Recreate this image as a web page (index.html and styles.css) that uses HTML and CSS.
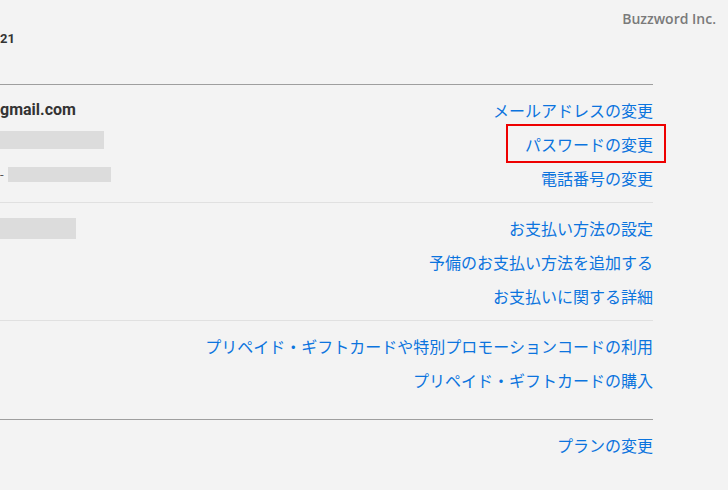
FILE: index.html
```html
<!DOCTYPE html>
<html lang="ja">
<head>
  <meta charset="UTF-8">
  <title>アカウント</title>
  <link rel="stylesheet" href="styles.css">
</head>
<body>
  <div class="brand">Buzzword Inc.</div>

  <header class="member">
    <span class="member-since">21</span>
  </header>

  <main class="account">
    <section class="block">
      <div class="row">
        <span class="email">gmail.com</span>
        <a href="#" class="link">メールアドレスの変更</a>
      </div>
      <div class="row">
        <span class="mask mask-pass"></span>
        <a href="#" class="link marked">パスワードの変更</a>
      </div>
      <div class="row">
        <span class="phone"><span class="dash">-</span><span class="mask mask-phone"></span></span>
        <a href="#" class="link">電話番号の変更</a>
      </div>
    </section>

    <section class="block">
      <div class="row">
        <span class="mask mask-card"></span>
        <a href="#" class="link">お支払い方法の設定</a>
      </div>
      <div class="row">
        <span></span>
        <a href="#" class="link">予備のお支払い方法を追加する</a>
      </div>
      <div class="row">
        <span></span>
        <a href="#" class="link">お支払いに関する詳細</a>
      </div>
    </section>

    <section class="block block-gift">
      <div class="row">
        <span></span>
        <a href="#" class="link">プリペイド・ギフトカードや特別プロモーションコードの利用</a>
      </div>
      <div class="row">
        <span></span>
        <a href="#" class="link">プリペイド・ギフトカードの購入</a>
      </div>
    </section>

    <section class="plan">
      <div class="row">
        <span></span>
        <a href="#" class="link">プランの変更</a>
      </div>
    </section>
  </main>
</body>
</html>
```

FILE: styles.css
```css
body {
  margin: 0;
  background: #f3f3f3;
  font-family: "Noto Sans CJK JP", "Noto Sans", sans-serif;
  color: #333;
  min-height: 490px;
  overflow: hidden;
}

.brand {
  position: absolute;
  top: 9px;
  right: 12px;
  font-family: "Open Sans", sans-serif;
  font-size: 14px;
  font-weight: 600;
  color: #7a7a7a;
}

.member {
  height: 84px;
  display: flex;
  align-items: center;
  padding-bottom: 8px;
  box-sizing: border-box;
}

.member-since {
  font-family: Roboto, sans-serif;
  font-weight: 700;
  font-size: 13px;
  color: #333;
}

.account {
  width: 653px;
  border-top: 1px solid #9e9e9e;
}

.block {
  padding: 8px 0 7px;
  border-bottom: 1px solid #e0e0e0;
}

.block-gift {
  padding-bottom: 22px;
  border-bottom: 1px solid #9e9e9e;
}

.plan {
  padding-top: 8px;
}

.row {
  display: flex;
  justify-content: space-between;
  align-items: flex-start;
  height: 34px;
}

.link {
  display: inline-block;
  position: relative;
  line-height: 34px;
  font-size: 16px;
  color: #0b74de;
  text-decoration: none;
}

/* red annotation around the password link */
.marked::after {
  content: "";
  position: absolute;
  top: -3px;
  bottom: -2px;
  left: -19px;
  right: -13px;
  border: 2px solid #ee0000;
}

.email {
  line-height: 34px;
  font-family: Roboto, sans-serif;
  font-weight: 700;
  font-size: 16px;
  color: #333;
}

.mask {
  display: block;
  background: #dcdcdc;
}

.mask-pass {
  width: 104px;
  height: 18px;
  margin-top: 4px;
}

.phone {
  display: flex;
  align-items: center;
  margin-top: 6px;
}

.dash {
  font-family: Roboto, sans-serif;
  font-size: 13px;
  color: #555;
  width: 8px;
  line-height: 15px;
}

.mask-phone {
  width: 103px;
  height: 15px;
}

.mask-card {
  width: 76px;
  height: 21px;
  margin-top: 7px;
}
```
